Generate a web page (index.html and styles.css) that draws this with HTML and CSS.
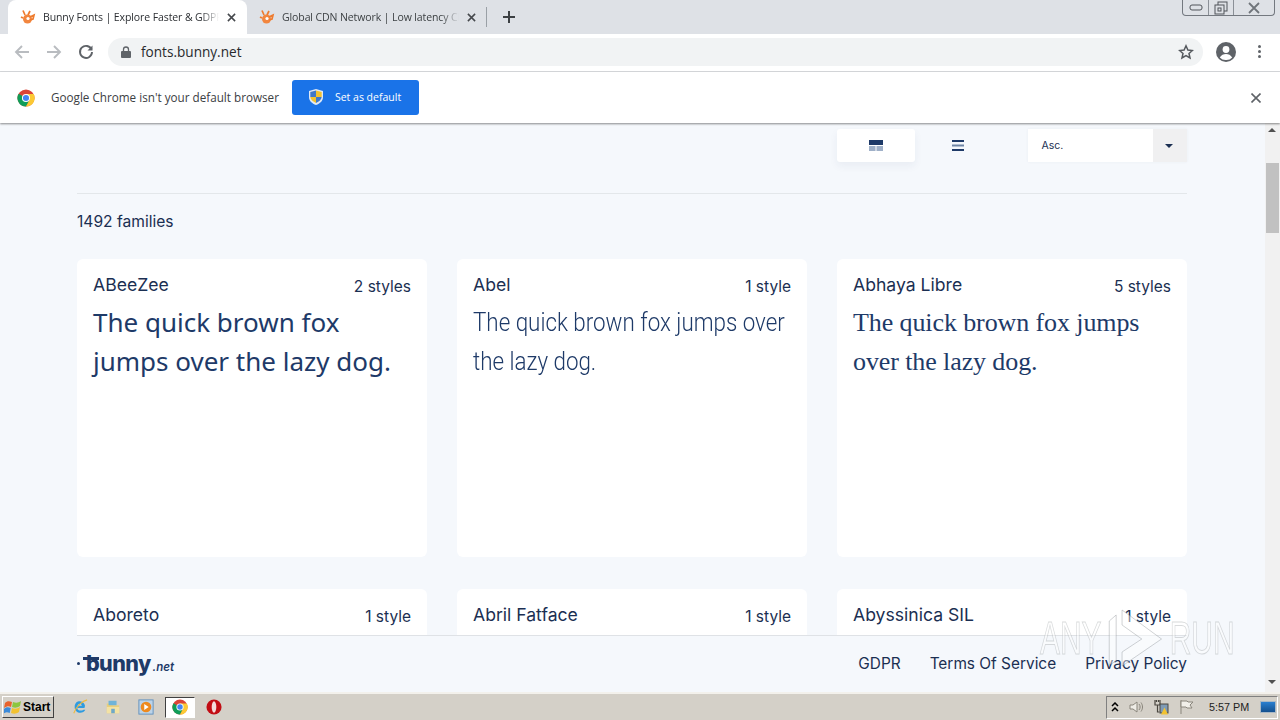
FILE: index.html
```html
<!DOCTYPE html>
<html lang="en">
<head>
    <meta charset="UTF-8">
    <title>Bunny Fonts | Explore Faster &amp; GDPR friendly fonts</title>
    <link rel="stylesheet" href="styles.css">
</head>
<body>
<div class="tabstrip">
    <div class="tab tab-active">
        <svg class="favicon" viewBox="0 0 16 16"><circle cx="7.500" cy="10" r="4.500" fill="#f2863f"/><path d="M5 6L3 1.500M8 6l2-4M10 8l4-2-1 4-3 1M3 9L1 8" fill="none" stroke="#ee7b2e" stroke-width="1.700"/><circle cx="8" cy="9.500" r="1.600" fill="#fff"/></svg>
        <span class="tab-title">Bunny Fonts | Explore Faster &amp; GDPR friendly</span>
        <svg class="tab-close" viewBox="0 0 10 10"><path d="M1 1l8 8M9 1l-8 8"/></svg>
    </div>
    <div class="tab">
        <svg class="favicon" viewBox="0 0 16 16"><circle cx="7.500" cy="10" r="4.500" fill="#f2863f"/><path d="M5 6L3 1.500M8 6l2-4M10 8l4-2-1 4-3 1M3 9L1 8" fill="none" stroke="#ee7b2e" stroke-width="1.700"/><circle cx="8" cy="9.500" r="1.600" fill="#fff"/></svg>
        <span class="tab-title">Global CDN Network | Low latency CDN</span>
        <svg class="tab-close" viewBox="0 0 10 10"><path d="M1 1l8 8M9 1l-8 8"/></svg>
    </div>
    <span class="tab-sep"></span>
    <svg class="tab-new" viewBox="0 0 12 12"><path d="M6 0v12M0 6h12"/></svg>
    <div class="win-buttons">
        <div class="win-btn win-min"><svg viewBox="0 0 14 8"><rect x="1" y="1" width="12" height="5" rx="2"/></svg></div>
        <div class="win-btn win-max"><svg viewBox="0 0 14 14"><rect x="4" y="1" width="9" height="9"/><rect x="1" y="4" width="9" height="9" fill="#dee1e6"/><rect x="4" y="7" width="3" height="3"/></svg></div>
        <div class="win-btn win-close"><svg viewBox="0 0 14 12"><path d="M2 1l10 10M12 1L2 11"/></svg></div>
    </div>
</div>

<div class="toolbar">
    <svg class="nav-icon nav-off" viewBox="0 0 16 16"><path d="M15 8H2M8 2L2 8l6 6"/></svg>
    <svg class="nav-icon nav-off" viewBox="0 0 16 16"><path d="M1 8h13M8 2l6 6-6 6"/></svg>
    <svg class="nav-icon" viewBox="0 0 16 16"><path d="M13.500 5.500A6 6 0 1 0 14 8"/><path class="solid" d="M14.500 1.500v5h-5z"/></svg>
    <div class="omnibox">
        <svg class="lock" viewBox="0 0 10 12"><path d="M2.500 5V3.500a2.500 2.500 0 0 1 5 0V5" fill="none" stroke="#5f6368" stroke-width="1.300"/><rect y="5" width="10" height="7" rx="1" fill="#5f6368"/></svg>
        <span class="url">fonts.bunny.net</span>
        <svg class="star" viewBox="0 0 16 16"><path d="M8 1.800l1.900 4.200 4.500.5-3.400 3 1 4.500L8 11.600 4 14l1-4.500-3.400-3 4.500-.5z"/></svg>
    </div>
    <svg class="avatar" viewBox="0 0 20 20"><circle cx="10" cy="10" r="10" fill="#5f6368"/><circle cx="10" cy="7.500" r="3.400" fill="#fff"/><path d="M3.800 15.500c1.400-2.600 3.800-3.600 6.200-3.600s4.800 1 6.200 3.600A8 8 0 0 1 10 18a8 8 0 0 1-6.200-2.500z" fill="#fff"/></svg>
    <div class="kebab"><i></i><i></i><i></i></div>
</div>

<div class="infobar">
    <svg class="chrome-logo" viewBox="0 0 20 20">
        <circle cx="10" cy="10" r="9.500" fill="#db4437"/>
        <path d="M10 10L1.800 5.200A9.500 9.500 0 0 0 10 19.500L14.800 11z" fill="#0f9d58"/>
        <path d="M10 5.500h8.600A9.500 9.500 0 0 1 10 19.500L14 12z" fill="#fcc934"/>
        <circle cx="10" cy="10" r="4.500" fill="#fff"/>
        <circle cx="10" cy="10" r="3.400" fill="#4285f4"/>
    </svg>
    <span class="infobar-text">Google Chrome isn't your default browser</span>
    <button class="default-btn">
        <svg class="shield" viewBox="0 0 14 16">
            <path d="M7 0l7 2v6c0 4-3 6.500-7 8-4-1.500-7-4-7-8V2z" fill="#dfe8f5"/>
            <path d="M7 1.500V8H1.300V3z" fill="#3f78c9"/>
            <path d="M7 8h5.700c-.3 2.700-2.500 4.500-5.700 6z" fill="#3f78c9"/>
            <path d="M7 1.500L12.700 3v5H7z" fill="#f2c230"/>
            <path d="M7 8v6C4 12.500 1.600 10.700 1.300 8z" fill="#f2c230"/>
        </svg>
        Set as default
    </button>
    <svg class="infobar-close" viewBox="0 0 10 10"><path d="M.5.5l9 9M9.500.5l-9 9"/></svg>
</div>

<div class="window">
    <div class="page">
        <main class="content">
            <div class="controls">
                <div class="view-btn view-btn-active">
                    <svg class="view-icon" viewBox="0 0 14 11"><rect width="14" height="5" fill="#1e3a68"/><rect y="6" width="6.500" height="5" fill="#9fb0c8"/><rect x="7.500" y="6" width="6.500" height="5" fill="#9fb0c8"/></svg>
                </div>
                <div class="view-btn">
                    <svg class="view-icon" viewBox="0 0 12 11"><rect width="12" height="2" fill="#1e3a68"/><rect y="4.500" width="12" height="2" fill="#6f85a5"/><rect y="9" width="12" height="2" fill="#1e3a68"/></svg>
                </div>
                <div class="sort-select">
                    <span class="sort-value">Asc.</span>
                    <span class="sort-arrow"></span>
                </div>
            </div>
            <p class="count">1492 families</p>
            <div class="grid">
                <article class="card">
                    <header class="card-head"><h2>ABeeZee</h2><span>2 styles</span></header>
                    <p class="sample sample-round">The quick brown fox jumps over the lazy dog.</p>
                </article>
                <article class="card">
                    <header class="card-head"><h2>Abel</h2><span>1 style</span></header>
                    <p class="sample sample-narrow">The quick brown fox jumps over the lazy dog.</p>
                </article>
                <article class="card">
                    <header class="card-head"><h2>Abhaya Libre</h2><span>5 styles</span></header>
                    <p class="sample sample-serif">The quick brown fox jumps over the lazy dog.</p>
                </article>
                <article class="card">
                    <header class="card-head"><h2>Aboreto</h2><span>1 style</span></header>
                </article>
                <article class="card">
                    <header class="card-head"><h2>Abril Fatface</h2><span>1 style</span></header>
                </article>
                <article class="card">
                    <header class="card-head"><h2>Abyssinica SIL</h2><span>1 style</span></header>
                </article>
            </div>
        </main>
        <footer class="footer">
            <div class="logo"><span class="logo-dot"></span><span class="logo-word">bunny</span><span class="logo-net">.net</span></div>
            <nav class="footer-links">
                <a>GDPR</a>
                <a>Terms Of Service</a>
                <a>Privacy Policy</a>
            </nav>
        </footer>
    </div>
    <div class="scrollbar">
        <span class="scroll-arrow scroll-up"></span>
        <div class="scroll-track"><div class="scroll-thumb"></div></div>
        <span class="scroll-arrow scroll-down"></span>
    </div>
</div>

<div class="taskbar">
    <button class="start">
        <svg class="start-flag" viewBox="0 0 18 16"><path d="M1 4c2-2 4-2 7-1l-1 5C5 7 3 7 0 9z" fill="#e8622c"/><path d="M9 3c3 1 5 1 8-1l-1 5c-3 2-5 2-8 1z" fill="#8cc63f"/><path d="M0 10c2-2 4-2 6.700-1l-1 5C3 13 2 13-1 15z" fill="#3b8ad9"/><path d="M8 9c3 1 5 1 8-1l-1 5c-3 2-5 2-8 1z" fill="#f2c230"/></svg>
        Start
    </button>
    <div class="quick-launch">
        <svg class="task-icon" viewBox="0 0 18 18"><path d="M14 10H6c0 3 4 4 7 2h2c-2 5-12 5-12-3s9-8 11-3c.5 1 1 2 0 4zM6 7.500h5c0-2.500-4-2.500-5 0z" fill="#2f9be0" fill-rule="evenodd"/><path d="M2 16C5 8 12 2 17 1" fill="none" stroke="#f0b93a" stroke-width="1.200"/></svg>
        <svg class="task-icon" viewBox="0 0 18 18"><path d="M2 5h5l2 2h7v9H2z" fill="#e9cf7b"/><rect x="4" y="2" width="9" height="5" fill="#6fb4d8"/><rect x="2" y="9" width="14" height="7" fill="#f3e2a4"/><rect x="7" y="11" width="4" height="5" fill="#6fa8c8"/></svg>
        <svg class="task-icon" viewBox="0 0 18 18"><rect x="1" y="1" width="16" height="16" fill="#bcd3e8" stroke="#5d8fbc"/><circle cx="9" cy="9" r="6" fill="#ee8a1f"/><path d="M7 5.500l5 3.500-5 3.500z" fill="#fff"/></svg>
        <div class="task-active">
            <svg class="task-icon" viewBox="0 0 20 20">
                <circle cx="10" cy="10" r="9.500" fill="#db4437"/>
                <path d="M10 10L1.800 5.200A9.500 9.500 0 0 0 10 19.500L14.800 11z" fill="#0f9d58"/>
                <path d="M10 5.500h8.600A9.500 9.500 0 0 1 10 19.500L14 12z" fill="#fcc934"/>
                <circle cx="10" cy="10" r="4.500" fill="#fff"/>
                <circle cx="10" cy="10" r="3.400" fill="#4285f4"/>
            </svg>
        </div>
        <svg class="task-icon" viewBox="0 0 18 18"><circle cx="9" cy="9" r="8.500" fill="#c20d14"/><ellipse cx="9" cy="9" rx="2.600" ry="6.500" fill="#f4dcdc"/></svg>
    </div>
    <div class="tray">
        <svg class="tray-icon tray-up" viewBox="0 0 8 10"><path d="M1 4l3-3 3 3M1 9l3-3 3 3"/></svg>
        <svg class="tray-icon" viewBox="0 0 16 16"><path d="M2 6h3l4-3v10l-4-3H2z" fill="#eeece6" stroke="#8a867c"/><path d="M11 5c1.500 2 1.500 4 0 6M13 3.500c2 3 2 6 0 9" fill="none" stroke="#8a867c"/></svg>
        <svg class="tray-icon" viewBox="0 0 16 16"><path d="M2 1v5h5V1M3.500 1v2M5.500 1v2M4.500 6v7h2" fill="none" stroke="#4a4740" stroke-width="1.200"/><rect x="7" y="5" width="8" height="9" fill="#7f9bb5" stroke="#4a4740"/><path d="M8 15.500l3.500-7 3.500 7z" fill="#f2c230"/></svg>
        <svg class="tray-icon" viewBox="0 0 16 16"><path d="M3 1v14" stroke="#8a867c"/><path d="M3 2h6l1 1h5l-3 3 2 3H9L8 8H3z" fill="#f1efe9" stroke="#8a867c"/></svg>
        <span class="clock">5:57 PM</span>
        <div class="show-desktop"></div>
    </div>
</div>

<div class="watermark">
    <span>ANY</span>
    <svg class="watermark-play" viewBox="0 0 60 62" preserveAspectRatio="none"><path d="M3 14l7-6v46l-7 4zM16 3l40 29-40 27V45l20-13-20-14z"/></svg>
    <span>RUN</span>
</div>
</body>
</html>
```

FILE: styles.css
```css
* {
    box-sizing: border-box;
}
body {
    margin: 0;
    height: 720px;
    overflow: hidden;
    display: flex;
    flex-direction: column;
    font-family: "Open Sans", sans-serif;
    background-color: #fff;
    color: #1b2f52;
}

/* browser chrome */
.tabstrip {
    height: 34px;
    flex: none;
    display: flex;
    align-items: flex-end;
    padding-left: 8px;
    background-color: #dee1e6;
}
.tab {
    width: 240px;
    height: 34px;
    display: flex;
    align-items: center;
    padding: 0 11px 0 12px;
    font-size: 10.5px;
    letter-spacing: -0.1px;
    color: #3c4043;
}
.tab-active {
    width: 239px;
    background-color: #fff;
    border-radius: 8px 8px 0 0;
    color: #2c2f33;
}
.favicon {
    width: 16px;
    height: 16px;
    flex: none;
    margin-right: 7px;
}
.tab-title {
    flex: 1;
    overflow: hidden;
    white-space: nowrap;
    -webkit-mask-image: linear-gradient(to right, #000 90%, transparent);
    mask-image: linear-gradient(to right, #000 90%, transparent);
}
.tab-close {
    width: 9px;
    height: 9px;
    flex: none;
    margin-left: 8px;
    fill: none;
    stroke: #45484c;
    stroke-width: 1.7;
}
.tab-sep {
    width: 1px;
    height: 20px;
    margin: 0 0 7px -1px;
    background-color: #9aa0a6;
}
.tab-new {
    width: 12px;
    height: 12px;
    margin: 0 0 11px 16px;
    fill: none;
    stroke: #3c4043;
    stroke-width: 2;
}
.win-buttons {
    display: flex;
    align-self: flex-start;
    margin-left: auto;
    margin-right: 5px;
    height: 16px;
    border: 1px solid #73787f;
    border-top: none;
    border-radius: 0 0 4px 4px;
}
.win-btn {
    display: flex;
    align-items: center;
    justify-content: center;
    width: 25px;
    border-left: 1px solid #8b9097;
}
.win-btn:first-child {
    border-left: none;
}
.win-close {
    width: 41px;
}
.win-btn svg {
    fill: none;
    stroke: #50545a;
}
.win-min svg {
    width: 14px;
    height: 8px;
}
.win-max svg {
    width: 14px;
    height: 14px;
}
.win-close svg {
    width: 14px;
    height: 12px;
    stroke: #70757b;
    stroke-width: 1.8;
}

.toolbar {
    height: 38px;
    flex: none;
    display: flex;
    align-items: center;
    padding: 0 19px 2px 14px;
    background-color: #fff;
    border-bottom: 1px solid #d9dbde;
}
.nav-icon {
    width: 16px;
    height: 16px;
    margin-right: 16px;
    fill: none;
    stroke: #5f6368;
    stroke-width: 1.9;
}
.nav-off {
    stroke: #b9bcc0;
}
.nav-icon .solid {
    fill: #5f6368;
    stroke: none;
}
.omnibox {
    flex: 1;
    height: 28px;
    margin: 0 13px 0 -2px;
    padding: 0 9px 0 13px;
    display: flex;
    align-items: center;
    background-color: #f1f3f4;
    border-radius: 14px;
}
.lock {
    width: 10px;
    height: 12px;
    margin-right: 10px;
}
.url {
    font-size: 13.6px;
    color: #27292c;
}
.star {
    width: 16px;
    height: 16px;
    margin-left: auto;
    fill: none;
    stroke: #55595e;
    stroke-width: 1.5;
}
.avatar {
    width: 20px;
    height: 20px;
    margin-right: 22px;
}
.kebab {
    display: flex;
    flex-direction: column;
    gap: 2px;
    width: 3px;
}
.kebab i {
    width: 3px;
    height: 3px;
    border-radius: 50%;
    background-color: #5f6368;
}

.infobar {
    height: 51px;
    flex: none;
    display: flex;
    align-items: center;
    padding: 0 19px 0 17px;
    background-color: #fff;
    box-shadow: 0 1px 2px rgba(0, 0, 0, 0.45);
    position: relative;
    z-index: 2;
}
.chrome-logo {
    width: 18px;
    height: 18px;
    margin-right: 16px;
}
.infobar-text {
    margin-bottom: 2px;
    font-size: 11.7px;
    color: #3c4043;
}
.default-btn {
    width: 127px;
    height: 35px;
    margin-left: 13px;
    display: flex;
    align-items: center;
    padding: 0 0 1px 17px;
    border: none;
    border-radius: 3px;
    background-color: #1a73e8;
    color: #fff;
    font-family: inherit;
    font-size: 10.5px;
}
.shield {
    width: 14px;
    height: 16px;
    margin-right: 12px;
}
.infobar-close {
    width: 10px;
    height: 10px;
    margin-left: auto;
    fill: none;
    stroke: #5f6368;
    stroke-width: 1.6;
}

/* page */
.window {
    flex: 1;
    min-height: 0;
    display: flex;
}
.page {
    flex: 1;
    min-width: 0;
    display: flex;
    flex-direction: column;
    background-color: #f5f8fc;
}
.content {
    flex: 1;
    min-height: 0;
    overflow: hidden;
    padding: 6px 78px 0 77px;
}
.controls {
    display: flex;
    align-items: flex-start;
    height: 65px;
    border-bottom: 1px solid #e3e7ea;
    padding-left: 760px;
}
.view-btn {
    width: 78px;
    height: 33px;
    margin-right: 4px;
    display: flex;
    align-items: center;
    justify-content: center;
    border-radius: 3px;
}
.view-btn-active {
    background-color: #fff;
    box-shadow: 0 4px 8px rgba(30, 58, 104, 0.06);
}
.view-icon {
    width: 14px;
    height: 11px;
}
.sort-select {
    width: 159px;
    height: 33px;
    margin-left: 28px;
    display: flex;
    align-items: center;
    justify-content: space-between;
    padding-left: 13px;
    background-color: #fff;
    box-shadow: 0 0 3px rgba(30, 58, 104, 0.05);
    font-family: Inter, sans-serif;
    font-size: 10.5px;
}
.sort-arrow {
    width: 34px;
    height: 33px;
    background-color: #f0f0f1;
    position: relative;
}
.sort-arrow::after {
    content: "";
    position: absolute;
    left: 12px;
    top: 15px;
    border-style: solid;
    border-width: 4px 4px 0;
    border-color: #1b2f52 transparent transparent;
}
.count {
    margin: 18px 0 27px;
    font-family: Inter, sans-serif;
    font-size: 15.6px;
    line-height: 20px;
}
.grid {
    display: grid;
    grid-template-columns: repeat(3, 350px);
    grid-auto-rows: 298px;
    column-gap: 30px;
    row-gap: 32px;
}
.card {
    padding: 12px 16px;
    background-color: #fff;
    border-radius: 6px;
}
.card-head {
    display: flex;
    justify-content: space-between;
    align-items: flex-end;
    height: 27px;
}
.card-head h2 {
    margin: 0;
    font-family: Inter, sans-serif;
    font-size: 17.6px;
    font-weight: 400;
    line-height: 26px;
}
.card-head span {
    font-family: Inter, sans-serif;
    font-size: 15.5px;
    line-height: 22px;
}
.sample {
    margin: 5px 0 0;
    color: #1e3a68;
    line-height: 39px;
}
.sample-round {
    font-family: "Noto Sans", sans-serif;
    font-size: 26px;
}
/* no condensed family installed, so squeeze a light one */
.sample-narrow {
    width: 115%;
    font-family: Roboto, sans-serif;
    font-size: 26px;
    font-weight: 300;
    transform: scaleX(0.86);
    transform-origin: left;
}
.sample-serif {
    font-family: "Liberation Serif", serif;
    font-size: 26px;
    letter-spacing: -0.1px;
}
.footer {
    height: 57px;
    flex: none;
    margin: 0 78px 0 77px;
    padding-bottom: 2px;
    display: flex;
    align-items: center;
    justify-content: space-between;
    border-top: 1px solid #dfe2e6;
}
.logo {
    display: flex;
    align-items: baseline;
    position: relative;
    color: #1e3a68;
    font-family: Inter, sans-serif;
    font-weight: 800;
}
.logo::before {
    content: "";
    position: absolute;
    left: 6px;
    top: 7px;
    width: 16px;
    height: 3px;
    background-color: #1e3a68;
}
.logo-dot {
    width: 3px;
    height: 3px;
    margin-right: 6px;
    background-color: #1e3a68;
    border-radius: 50%;
    align-self: center;
}
.logo-word {
    font-size: 21.5px;
    letter-spacing: -0.6px;
}
.logo-net {
    font-size: 11.5px;
    font-weight: 600;
    font-style: italic;
    margin-left: 2px;
}
.footer-links {
    display: flex;
    gap: 29px;
    font-family: Inter, sans-serif;
    font-size: 15.4px;
}

.scrollbar {
    width: 15px;
    flex: none;
    display: flex;
    flex-direction: column;
    background-color: #f1f1f1;
}
.scroll-arrow {
    height: 15px;
    flex: none;
    position: relative;
}
.scroll-arrow::after {
    content: "";
    position: absolute;
    left: 3px;
    border-style: solid;
    border-color: transparent;
}
.scroll-up::after {
    top: 5px;
    border-width: 0 4px 4px;
    border-bottom-color: #505050;
}
.scroll-down::after {
    top: 3px;
    border-width: 4px 4px 0;
    border-top-color: #505050;
}
.scroll-track {
    flex: 1;
    padding-top: 25px;
}
.scroll-thumb {
    width: 13px;
    height: 70px;
    margin-left: 1px;
    background-color: #c1c1c1;
}

/* windows taskbar */
.taskbar {
    height: 28px;
    flex: none;
    display: flex;
    align-items: center;
    padding-left: 2px;
    background-color: #d4d0c8;
    border-top: 2px solid #f3f1ec;
}
.start {
    width: 52px;
    height: 22px;
    display: flex;
    align-items: center;
    padding: 0 0 0 1px;
    background-color: #d4d0c8;
    border: 1px solid;
    border-color: #fff #404040 #404040 #fff;
    font-family: "Liberation Sans", sans-serif;
    font-size: 12px;
    font-weight: 700;
    color: #000;
}
.start-flag {
    width: 18px;
    height: 16px;
    margin-right: 1px;
}
.quick-launch {
    display: flex;
    align-items: center;
    margin-left: 18px;
    gap: 17px;
}
.task-icon {
    width: 16px;
    height: 16px;
    display: block;
}
.task-active {
    width: 30px;
    height: 21px;
    margin: 0 -6px;
    display: flex;
    align-items: center;
    justify-content: center;
    background-color: #fff;
    border: 1px solid;
    border-color: #404040 #fff #fff #404040;
}
.tray {
    margin-left: auto;
    width: 172px;
    height: 23px;
    margin-right: 2px;
    display: flex;
    align-items: center;
    padding: 0 1px 0 4px;
    gap: 9px;
    border: 1px solid;
    border-color: #808080 #fff #fff #808080;
}
.tray-icon {
    width: 16px;
    height: 16px;
    flex: none;
}
.tray-up {
    width: 8px;
    height: 10px;
    fill: none;
    stroke: #000;
    stroke-width: 1.5;
}
.clock {
    margin-left: 6px;
    font-family: "Liberation Sans", sans-serif;
    font-size: 10.8px;
    color: #222;
    white-space: nowrap;
}
.show-desktop {
    width: 16px;
    height: 12px;
    margin-left: auto;
    background: linear-gradient(#2a7fd0, #14508f);
    border: 1px solid #a9b8c6;
}

/* sandbox watermark, sits over the page */
.watermark {
    position: absolute;
    left: 1040px;
    top: 607px;
    display: flex;
    align-items: center;
    gap: 7px;
    font-family: "Liberation Sans", sans-serif;
    font-size: 46px;
    color: rgba(255, 255, 255, 0.45);
    -webkit-text-stroke: 1px rgba(120, 125, 130, 0.28);
    transform: scaleX(0.65);
    transform-origin: left;
    pointer-events: none;
}
.watermark-play {
    width: 91px;
    height: 62px;
    fill: rgba(255, 255, 255, 0.45);
    stroke: rgba(120, 125, 130, 0.35);
    stroke-width: 1;
}
```
